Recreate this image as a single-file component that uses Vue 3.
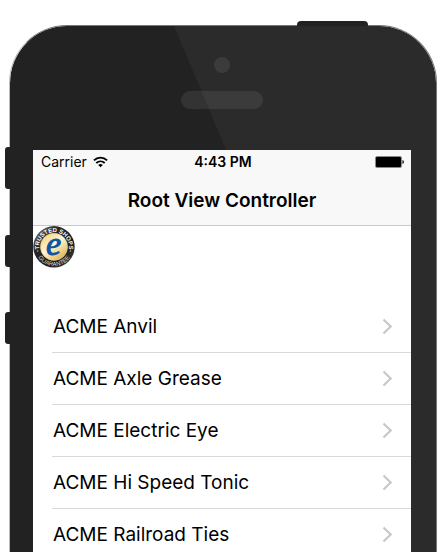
<script setup>
const products = [
  'ACME Anvil',
  'ACME Axle Grease',
  'ACME Electric Eye',
  'ACME Hi Speed Tonic',
  'ACME Railroad Ties',
]
</script>

<template>
  <div class="page">
    <div class="device">
      <span class="button power"></span>
      <span class="button mute"></span>
      <span class="button volume-up"></span>
      <span class="button volume-down"></span>

      <div class="bezel">
        <span class="camera"></span>
        <span class="speaker"></span>
      </div>
      <div class="glare"></div>

      <main class="screen">
        <header class="top">
          <div class="status">
            <div class="carrier">
              <span>Carrier</span>
              <svg class="wifi" width="15" height="12" viewBox="0 0 15 12" aria-hidden="true">
                <g fill="none" stroke="#000" stroke-width="1.800">
                  <path d="M0.900 4.400C4.600 0.600 10.400 0.600 14.100 4.400" />
                  <path d="M3.300 7C5.700 4.700 9.300 4.700 11.700 7" />
                </g>
                <path d="M5.200 8.900C6.500 7.800 8.500 7.800 9.800 8.900L7.500 11.300Z" />
              </svg>
            </div>
            <time class="clock">4:43 PM</time>
            <svg class="battery" width="30" height="12" viewBox="0 0 30 12" aria-hidden="true">
              <rect x="0.500" y="0.500" width="26" height="11" rx="1.500" fill="#000" stroke="#8a8a8a" />
              <path d="M27.500 4C29.300 4.300 29.300 7.700 27.500 8Z" />
            </svg>
          </div>
          <h1 class="title">Root View Controller</h1>
        </header>

        <div class="trust">
          <svg width="42" height="42" viewBox="0 0 42 42" role="img" aria-label="Trusted Shops Guarantee">
            <defs>
              <linearGradient id="ring" x1="0" y1="0" x2="1" y2="1">
                <stop offset="0" stop-color="#888" />
                <stop offset="0.300" stop-color="#292929" />
                <stop offset="0.700" stop-color="#1c1c1c" />
                <stop offset="1" stop-color="#555" />
              </linearGradient>
              <linearGradient id="gold" x1="0.100" y1="0" x2="0.900" y2="1">
                <stop offset="0" stop-color="#efd272" />
                <stop offset="0.450" stop-color="#fff6d4" />
                <stop offset="1" stop-color="#dba93c" />
              </linearGradient>
              <path id="arc-top" d="M6.300 23.500A14.900 14.900 0 1 1 35.700 23.500" />
              <path id="arc-bottom" d="M2.600 25.500A18.900 18.900 0 0 0 39.400 25.500" />
            </defs>
            <circle cx="21" cy="20.800" r="20.700" fill="url(#ring)" />
            <circle cx="21" cy="20.800" r="13.600" fill="url(#gold)" stroke="#e8d9a0" stroke-width="0.500" />
            <text class="seal-text" fill="#fff" font-weight="700">
              <textPath href="#arc-top" startOffset="50%" text-anchor="middle">TRUSTED SHOPS</textPath>
            </text>
            <text class="seal-text" fill="#d5d5d5">
              <textPath href="#arc-bottom" startOffset="50%" text-anchor="middle">GUARANTEE</textPath>
            </text>
            <circle cx="4.600" cy="25" r="0.800" fill="#d6b65a" />
            <circle cx="37.400" cy="25" r="0.800" fill="#d6b65a" />
            <text class="seal-mark" x="20.500" y="29" text-anchor="middle">e</text>
          </svg>
        </div>

        <ul class="list">
          <li v-for="product in products" :key="product">
            <a class="row" href="#">
              <span>{{ product }}</span>
              <svg width="11" height="17" viewBox="0 0 11 17" aria-hidden="true">
                <path d="M1.500 1.500L8.700 8.500L1.500 15.500" fill="none" stroke="#c7c7cc" stroke-width="2.200" />
              </svg>
            </a>
          </li>
        </ul>
      </main>
    </div>
  </div>
</template>

<style>
body {
  margin: 0;
  background: #fff;
}
</style>

<style scoped>
.page {
  box-sizing: border-box;
  height: 100vh;
  padding: 25px 7px 0 9px;
  overflow: hidden;
  font-family: Inter, "Liberation Sans", sans-serif;
  color: #000;
}

.device {
  position: relative;
  padding: 0 25px 24px 23px;
  border: 1px solid #777;
  border-left-color: #bbb;
  border-bottom: 0;
  border-radius: 58px 58px 0 0;
  background: #222;
  background-clip: padding-box;
}

.button {
  position: absolute;
  left: -5px;
  width: 5px;
  height: 32px;
  border-radius: 3px 0 0 3px;
  background: #222;
}

.power {
  top: -5px;
  left: auto;
  right: 68px;
  width: 71px;
  height: 5px;
  border-radius: 4px 4px 0 0;
}

.mute {
  top: 121px;
  height: 42px;
}

.volume-up {
  top: 209px;
}

.volume-down {
  top: 286px;
}

.bezel {
  display: flex;
  flex-direction: column;
  align-items: center;
  gap: 18px;
  padding: 31px 0 41px;
}

.camera {
  width: 16px;
  height: 16px;
  border-radius: 50%;
  background: #333;
}

.speaker {
  width: 82px;
  height: 18px;
  border-radius: 9px;
  background: #333;
}

.glare {
  position: absolute;
  inset: 0;
  border-radius: 0 57px 0 0;
  background: rgba(255, 255, 255, 0.045);
  clip-path: polygon(164px 0, 100% 0, 100% 100%, 399px 100%);
}

.screen {
  position: relative;
  background: #fff;
}

.top {
  border-bottom: 1px solid #c8c8c8;
  background: #f8f8f8;
}

.status {
  display: grid;
  grid-template-columns: 1fr auto 1fr;
  align-items: center;
  height: 24px;
  padding: 0 6px 0 8px;
  font-size: 14px;
  line-height: 24px;
}

.carrier {
  display: flex;
  align-items: center;
  gap: 6px;
}

.clock {
  font-weight: 600;
}

.battery {
  justify-self: end;
}

.title {
  margin: 0;
  padding: 14px 0 11px;
  font-size: 19px;
  font-weight: 600;
  line-height: 26px;
  text-align: center;
}

.trust {
  height: 75px;
}

.trust svg {
  display: block;
}

.seal-text {
  font-family: "Liberation Sans", sans-serif;
  font-size: 6px;
}

.seal-mark {
  font-family: "Liberation Serif", serif;
  font-size: 34px;
  font-style: italic;
  font-weight: 400;
  fill: #0c55a4;
  stroke: #0c55a4;
  stroke-width: 1;
}

.list {
  margin: 0;
  padding: 0 0 0 19px;
  list-style: none;
}

.row {
  display: flex;
  align-items: center;
  justify-content: space-between;
  box-sizing: border-box;
  height: 52px;
  padding: 0 18px 0 1px;
  border-bottom: 1px solid #d9d9dc;
  font-size: 19px;
  line-height: 26px;
  color: #000;
  text-decoration: none;
}
</style>
